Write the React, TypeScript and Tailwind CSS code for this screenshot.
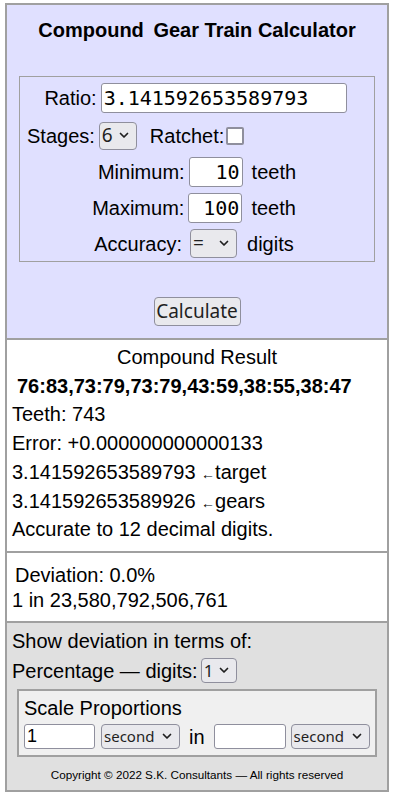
import React from "react";

function Chevron() {
  return (
    <svg width="10" height="7" viewBox="0 0 10 7" fill="none" stroke="currentColor" strokeWidth="1.7" strokeLinecap="round" strokeLinejoin="round">
      <path d="M1.5 1.5l3.5 3.5 3.5-3.5" />
    </svg>
  );
}

interface SelectBoxProps {
  value: string;
  className: string;
}

function SelectBox({ value, className }: SelectBoxProps) {
  return (
    <div
      className={`inline-flex items-center justify-between border border-[#8f8f9d] bg-[#e9e9ed] rounded-[4px] pl-[2px] pr-[7px] font-['Noto_Sans',sans-serif] text-[#1f1f1f] ${className}`}
    >
      <span>{value}</span>
      <Chevron />
    </div>
  );
}

const inputCls = "border border-[#8f8f9d] bg-white rounded-[3px] font-['DejaVu_Sans_Mono',monospace] text-black px-[2px] outline-none";

export default function App() {
  return (
    <div className="min-h-screen bg-white pt-[3px] pl-[5px] font-['Liberation_Sans',Arial,sans-serif] text-black">
      <div className="w-[384px] border-2 border-[#a0a0a0]">
        {/* input panel */}
        <div className="h-[333px] bg-[#e0e0ff] pt-[14px] flex flex-col">
          <h1 className="text-center text-[20px] font-bold leading-[22px]">
            <span className="mr-[4px]">Compound</span> Gear Train Calculator
          </h1>
          <div className="mt-[35px] mx-[12px] border border-[#a0a0a0] pt-[2px] text-[20px]">
            <div className="h-[38px] flex items-center justify-center gap-[4px] pr-[3px]">
              <span>Ratio:</span>
              <input className={`${inputCls} w-[246px] h-[30px] text-[20px]`} defaultValue="3.141592653589793" />
            </div>
            <div className="h-[37px] flex items-center pl-[7px]">
              <span>Stages:</span>
              <SelectBox value="6" className="ml-[4px] w-[38px] h-[28px] text-[19px]" />
              <span className="ml-[13px]">Ratchet:</span>
              <span className="ml-[2px] w-[18px] h-[18px] border-2 border-[#8f8f9d] bg-white rounded-[2px]" />
            </div>
            <div className="h-[36px] flex items-center justify-center">
              <span>Minimum:</span>
              <input className={`${inputCls} ml-[4px] w-[54px] h-[30px] text-[20px] text-right`} defaultValue="10" />
              <span className="ml-[9px]">teeth</span>
            </div>
            <div className="h-[36px] flex items-center justify-center pr-[6px]">
              <span>Maximum:</span>
              <input className={`${inputCls} ml-[4px] w-[54px] h-[30px] text-[20px] text-right`} defaultValue="100" />
              <span className="ml-[9px]">teeth</span>
            </div>
            <div className="h-[35px] flex items-center justify-center pr-[6px]">
              <span>Accuracy:</span>
              <SelectBox value="=" className="ml-[8px] w-[47px] h-[29px] text-[19px]" />
              <span className="ml-[10px]">digits</span>
            </div>
          </div>
          <div className="mt-[35px] flex justify-center">
            <button className="w-[87px] h-[29px] border border-[#8f8f9d] bg-[#e9e9ed] rounded-[4px] font-['Noto_Sans',sans-serif] text-[19px] leading-none text-[#1f1f1f]">
              Calculate
            </button>
          </div>
        </div>

        {/* result */}
        <div className="h-[213px] border-t-2 border-[#a0a0a0] bg-white pt-[3px] pl-[5px] text-[20px] leading-[28.7px]">
          <div className="text-center pr-[5px]">Compound Result</div>
          <div className="font-bold pl-[5px]">76:83,73:79,73:79,43:59,38:55,38:47</div>
          <div>Teeth: 743</div>
          <div>Error: +0.000000000000133</div>
          <div>3.141592653589793 <span className="text-[14px] leading-none">←</span>target</div>
          <div>3.141592653589926 <span className="text-[14px] leading-none">←</span>gears</div>
          <div>Accurate to 12 decimal digits.</div>
        </div>

        {/* deviation */}
        <div className="h-[70px] border-t-2 border-[#a0a0a0] bg-white pt-[10px] pl-[5px] text-[20px] leading-[25px]">
          <div className="pl-[3px]">Deviation: 0.0%</div>
          <div>1 in 23,580,792,506,761</div>
        </div>

        {/* options */}
        <div className="h-[169px] border-t-2 border-[#a0a0a0] bg-[#e0e0e0] pt-[4px] text-[20px]">
          <div className="pl-[5px] leading-[29px]">Show deviation in terms of:</div>
          <div className="pl-[5px] h-[29px] flex items-center">
            <span>Percentage — digits:</span>
            <SelectBox value="1" className="ml-[3px] w-[36px] h-[25px] text-[17px]" />
          </div>
          <div className="mt-[4px] mx-[10px] border-2 border-[#a0a0a0] bg-[#f0f0f0] pl-[5px] pt-[4px] pb-[6px]">
            <div className="leading-[26px]">Scale Proportions</div>
            <div className="mt-[3px] flex items-center h-[25px]">
              <input className="w-[71px] h-[25px] border border-[#8f8f9d] bg-white rounded-[3px] px-[2px] text-[18px] outline-none" defaultValue="1" />
              <SelectBox value="second" className="ml-[6px] w-[79px] h-[25px] text-[15px]" />
              <span className="ml-[9px] mr-[9px]">in</span>
              <input className="w-[72px] h-[25px] border border-[#8f8f9d] bg-white rounded-[3px] px-[2px] text-[18px] outline-none" defaultValue="" />
              <SelectBox value="second" className="ml-[5px] w-[79px] h-[25px] text-[15px]" />
            </div>
          </div>
          <div className="mt-[11px] text-center text-[11.7px] leading-[14px]">Copyright © 2022 S.K. Consultants — All rights reserved</div>
        </div>
      </div>
    </div>
  );
}
